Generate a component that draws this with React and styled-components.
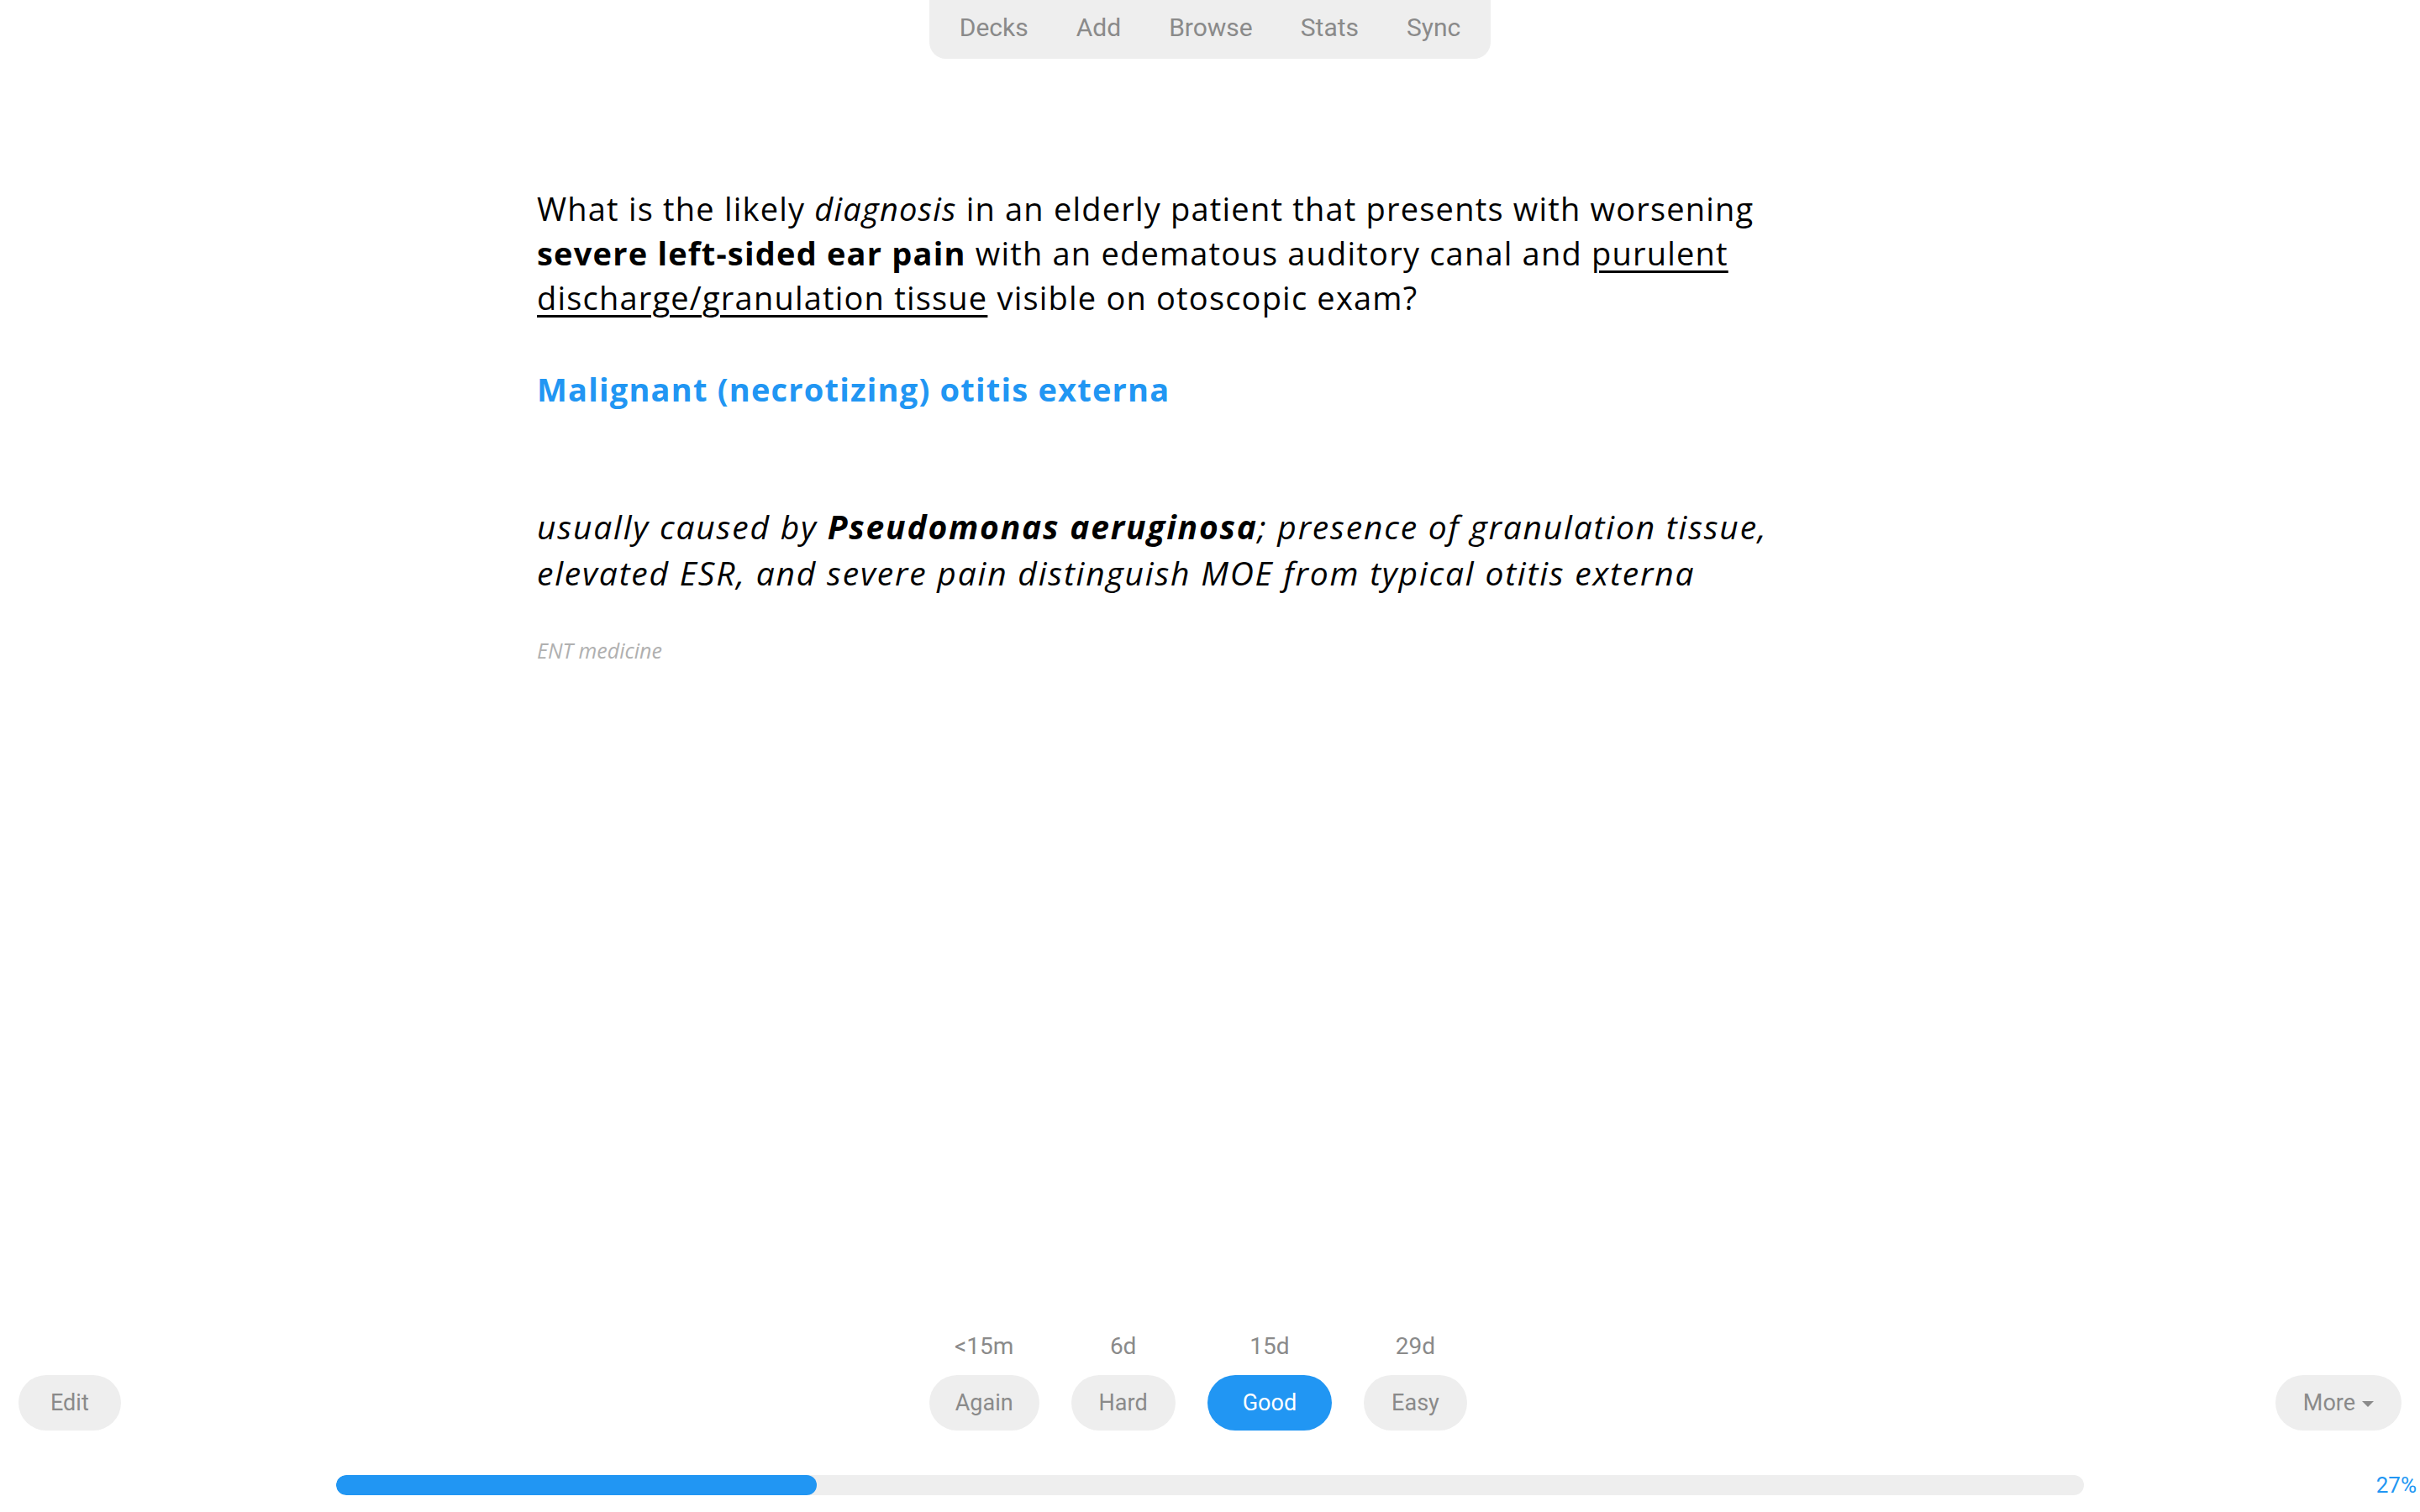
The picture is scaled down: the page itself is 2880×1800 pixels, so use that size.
import React from "react";
import styled, { createGlobalStyle } from "styled-components";

const Global = createGlobalStyle`
  html, body { margin: 0; padding: 0; background: #fff; }
  body { font-family: Roboto, "Noto Sans", sans-serif; }
  * { box-sizing: border-box; }
`;

const Page = styled.div`
  min-height: 100vh;
  display: flex;
  flex-direction: column;
`;

const NavBar = styled.nav`
  align-self: center;
  display: flex;
  align-items: center;
  gap: 57px;
  height: 70px;
  padding: 0 36px 4px;
  background: #eeeeee;
  border-radius: 0 0 20px 20px;
`;

const NavLink = styled.a`
  font-size: 30px;
  color: #8a8a8a;
  text-decoration: none;
  line-height: 1;
`;

const Card = styled.main`
  flex: 1;
  width: 1602px;
  margin: 0 auto;
  padding-top: 152px;
  font-family: "Open Sans", "Noto Sans", sans-serif;
  color: #000;
`;

const Question = styled.div`
  font-size: 38px;
  line-height: 53px;
  letter-spacing: 1.2px;
  white-space: nowrap;
`;

const Answer = styled.div`
  margin-top: 56px;
  font-size: 38px;
  line-height: 53px;
  letter-spacing: 1.2px;
  font-weight: 700;
  color: #2196f3;
`;

const Extra = styled.div`
  margin-top: 109px;
  font-size: 39px;
  line-height: 55px;
  letter-spacing: 1.8px;
  font-style: italic;
  white-space: nowrap;
`;

const Tags = styled.div`
  margin-top: 48px;
  font-size: 25px;
  font-style: italic;
  color: #b0b0b0;
`;

const U = styled.span`
  text-decoration: underline;
  text-decoration-thickness: 3px;
  text-underline-offset: 6px;
`;

const Footer = styled.footer`
  display: flex;
  flex-direction: column;
  padding-bottom: 20px;
`;

const AnswerRow = styled.div`
  display: flex;
  align-items: flex-end;
  padding: 0 22px;
`;

const Cluster = styled.div`
  flex: 1;
  display: flex;
  justify-content: center;
  align-items: flex-end;
  gap: 38px;
`;

const Choice = styled.div`
  display: flex;
  flex-direction: column;
  align-items: center;
  gap: 17px;
`;

const Interval = styled.span`
  font-size: 28px;
  line-height: 34px;
  color: #8a8a8a;
`;

const Pill = styled.button`
  height: 66px;
  padding: 0 ${(p) => p.$pad ?? 33}px;
  border: none;
  border-radius: 33px;
  font-family: Roboto, "Noto Sans", sans-serif;
  font-size: 27px;
  background: ${(p) => (p.$primary ? "#2196f3" : "#eeeeee")};
  color: ${(p) => (p.$primary ? "#ffffff" : "#8a8a8a")};
  display: inline-flex;
  align-items: center;
  gap: 8px;
  cursor: pointer;
`;

const Caret = styled.span`
  width: 0;
  height: 0;
  border-left: 7px solid transparent;
  border-right: 7px solid transparent;
  border-top: 7px solid #8a8a8a;
  margin-top: 3px;
`;

const ProgressRow = styled.div`
  margin-top: 53px;
  display: grid;
  grid-template-columns: 1fr 2080px 1fr;
  align-items: center;
`;

const Track = styled.div`
  grid-column: 2;
  height: 24px;
  border-radius: 12px;
  background: #eeeeee;
  overflow: hidden;
`;

const Fill = styled.div`
  height: 100%;
  border-radius: 12px;
  background: #2196f3;
`;

const Percent = styled.span`
  grid-column: 3;
  justify-self: end;
  padding-right: 4px;
  font-size: 26px;
  line-height: 24px;
  color: #2196f3;
`;

const choices = [
  { ivl: "<15m", label: "Again", pad: 31 },
  { ivl: "6d", label: "Hard", pad: 33 },
  { ivl: "15d", label: "Good", primary: true, pad: 42 },
  { ivl: "29d", label: "Easy", pad: 33 },
];

export default function App() {
  const progress = 27;
  return (
    <>
      <Global />
      <Page>
        <NavBar>
          {["Decks", "Add", "Browse", "Stats", "Sync"].map((n) => (
            <NavLink key={n}>{n}</NavLink>
          ))}
        </NavBar>
        <Card>
          <Question>
            What is the likely <i>diagnosis</i> in an elderly patient that presents with worsening
            <br />
            <b>severe left-sided ear pain</b> with an edematous auditory canal and <U>purulent</U>
            <br />
            <U>discharge/granulation tissue</U> visible on otoscopic exam?
          </Question>
          <Answer>Malignant (necrotizing) otitis externa</Answer>
          <Extra>
            usually caused by <b>Pseudomonas aeruginosa</b>; presence of granulation tissue,
            <br />
            elevated ESR, and severe pain distinguish MOE from typical otitis externa
          </Extra>
          <Tags>ENT medicine</Tags>
        </Card>
        <Footer>
          <AnswerRow>
            <Pill $pad={38}>Edit</Pill>
            <Cluster>
              {choices.map((c) => (
                <Choice key={c.label}>
                  <Interval>{c.ivl}</Interval>
                  <Pill $primary={c.primary} $pad={c.pad}>
                    {c.label}
                  </Pill>
                </Choice>
              ))}
            </Cluster>
            <Pill>
              More <Caret />
            </Pill>
          </AnswerRow>
          <ProgressRow>
            <Track>
              <Fill style={{ width: `${progress + 0.5}%` }} />
            </Track>
            <Percent>{progress}%</Percent>
          </ProgressRow>
        </Footer>
      </Page>
    </>
  );
}
